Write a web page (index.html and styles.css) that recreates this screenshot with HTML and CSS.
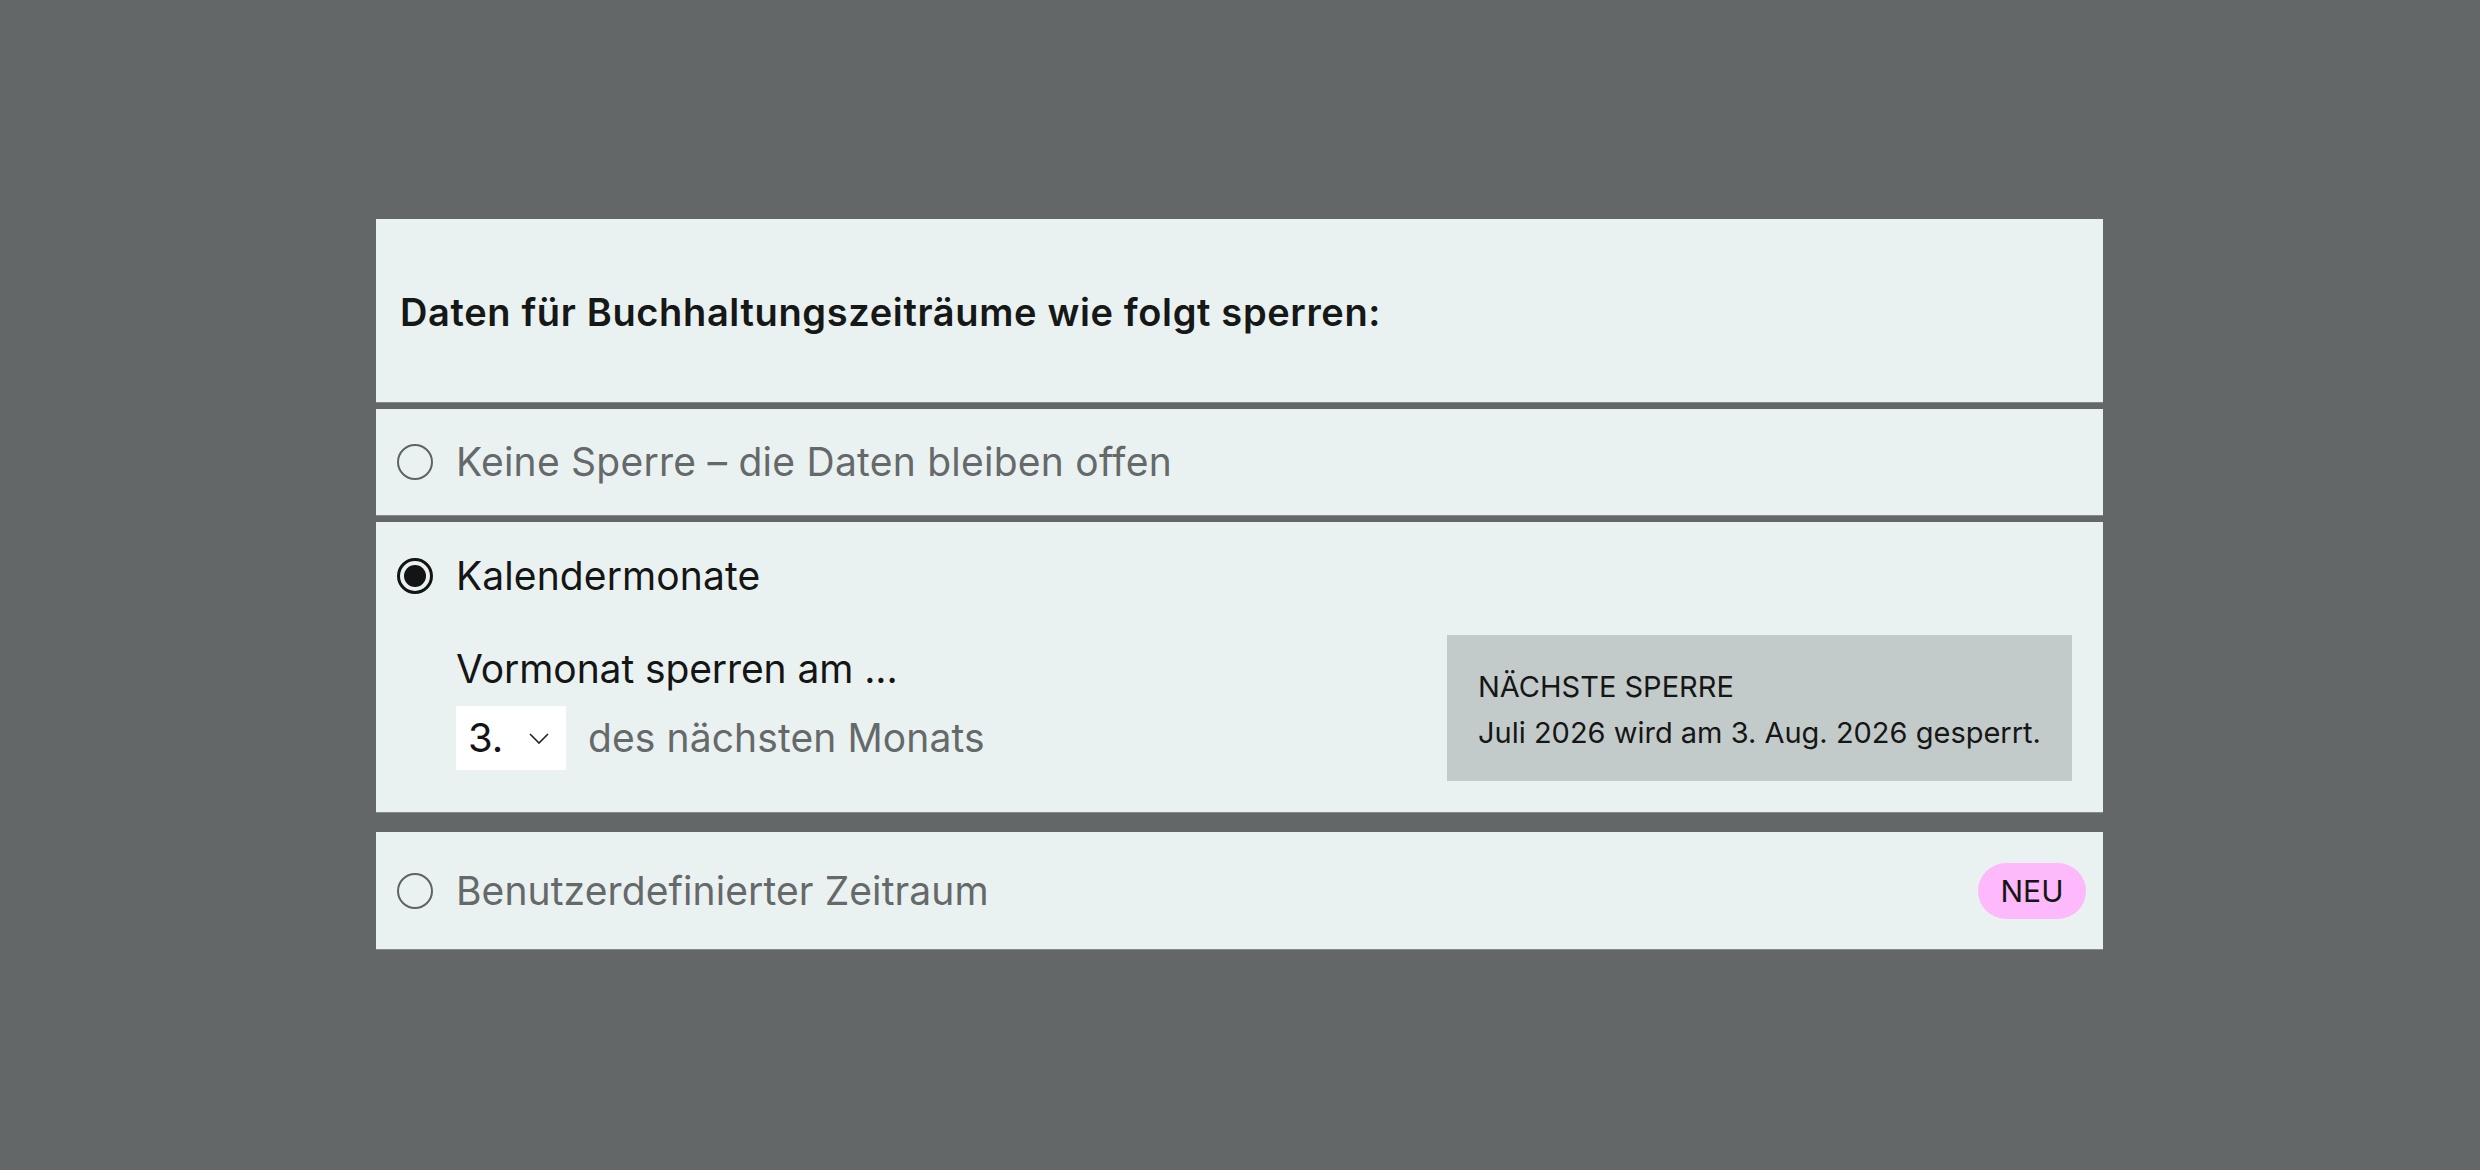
FILE: index.html
```html
<!DOCTYPE html>
<html lang="de">
<head>
<meta charset="utf-8">
<title>Sperrzeiträume</title>
<link rel="stylesheet" href="styles.css">
</head>
<body>
<main class="card">
  <header class="card-head">
    <h2 class="title">Daten für Buchhaltungszeiträume wie folgt sperren:</h2>
  </header>

  <section class="opt opt-none">
    <span class="radio"></span>
    <span class="opt-label muted wide">Keine Sperre – die Daten bleiben offen</span>
  </section>

  <section class="opt-month">
    <div class="opt-line">
      <span class="radio radio-on"><span class="dot"></span></span>
      <span class="opt-label">Kalendermonate</span>
    </div>
    <div class="month-body">
      <div class="month-left">
        <div class="sub-label">Vormonat sperren am ...</div>
        <div class="select-row">
          <div class="select">
            <span class="select-val">3.</span>
            <svg class="chev" width="20" height="11" viewBox="0 0 20 11"><polyline points="1,1 10,10 19,1" fill="none" stroke="#222" stroke-width="1.6"/></svg>
          </div>
          <span class="opt-label muted">des nächsten Monats</span>
        </div>
      </div>
      <div class="info">
        <div class="info-title">NÄCHSTE SPERRE</div>
        <div class="info-text">Juli 2026 wird am 3. Aug. 2026 gesperrt.</div>
      </div>
    </div>
  </section>

  <section class="opt opt-custom">
    <span class="radio"></span>
    <span class="opt-label muted">Benutzerdefinierter Zeitraum</span>
    <span class="badge">NEU</span>
  </section>
</main>
</body>
</html>
```

FILE: styles.css
```css
html, body {
  margin: 0;
  padding: 0;
}
body {
  background: #636768;
  width: 2480px;
  height: 1170px;
  font-family: Inter, "Noto Sans", sans-serif;
  color: #151515;
  overflow: hidden;
}
.card {
  margin: 219px 0 0 376px;
  width: 1727px;
  display: flex;
  flex-direction: column;
}
.card > * {
  background: #eaf2f1;
  border-bottom: 1px solid #858989;
  box-sizing: border-box;
}
.card-head {
  height: 184px;
  display: flex;
  align-items: center;
  padding-left: 24px;
}
.title {
  margin: 0;
  font-size: 38px;
  font-weight: 600;
  color: #161817;
  letter-spacing: 0.64px;
  padding-top: 2px;
}
.opt {
  display: flex;
  align-items: center;
  padding: 0 17px 0 21px;
}
.opt-none {
  margin-top: 6px;
  height: 107px;
}
.opt-month {
  margin-top: 6px;
  height: 291px;
  padding: 30px 31px 0 21px;
}
.opt-custom {
  margin-top: 19px;
  height: 118px;
}
.radio {
  width: 36px;
  height: 36px;
  box-sizing: border-box;
  border: 2px solid #5f6364;
  border-radius: 50%;
  flex: none;
  margin-right: 23px;
  display: flex;
  align-items: center;
  justify-content: center;
}
.radio-on {
  border: 3px solid #141414;
}
.dot {
  width: 22px;
  height: 22px;
  border-radius: 50%;
  background: #141414;
}
.opt-label {
  font-size: 39px;
  line-height: 48px;
  letter-spacing: 0.1px;
}
.opt-label.wide {
  letter-spacing: 0.25px;
}
.muted {
  color: #65696a;
}
.opt-line {
  display: flex;
  align-items: center;
  height: 48px;
}
.month-body {
  display: flex;
  justify-content: space-between;
  align-items: flex-start;
  margin-top: 35px;
}
.month-left {
  padding-left: 59px;
  padding-top: 10px;
}
.sub-label {
  font-size: 39px;
  line-height: 48px;
  letter-spacing: -0.1px;
}
.select-row {
  display: flex;
  align-items: center;
  margin-top: 13px;
}
.select {
  width: 110px;
  height: 64px;
  background: #ffffff;
  display: flex;
  align-items: center;
  box-sizing: border-box;
  padding-left: 12px;
  margin-right: 22px;
}
.select-val {
  font-size: 40px;
  line-height: 48px;
  color: #141414;
  width: 61px;
}
.chev {
  display: block;
}
.info {
  width: 625px;
  height: 146px;
  background: #c3cbca;
  box-sizing: border-box;
  padding: 33px 0 0 31px;
  display: flex;
  flex-direction: column;
  gap: 8px;
}
.info-title, .info-text {
  font-size: 29px;
  line-height: 38px;
  color: #161616;
}
.badge {
  margin-left: auto;
  width: 108px;
  height: 56px;
  border-radius: 28px;
  background: #fdb9fc;
  display: flex;
  align-items: center;
  justify-content: center;
  font-size: 30px;
  color: #151515;
}
```
